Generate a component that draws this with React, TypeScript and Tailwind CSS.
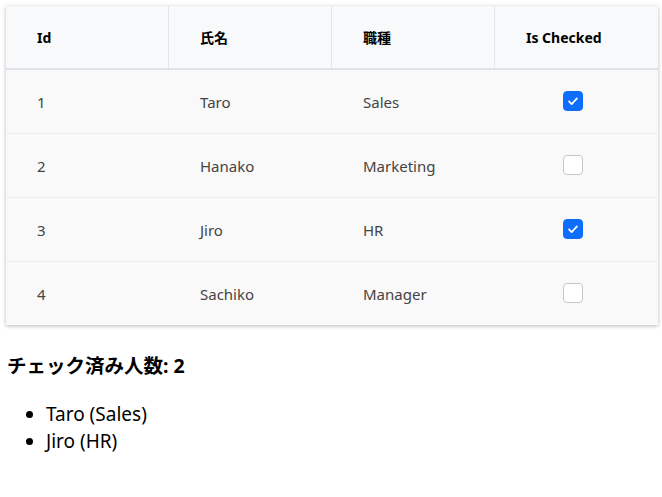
import { useState } from "react";

type Person = { id: number; name: string; job: string; checked: boolean };

const initial: Person[] = [
  { id: 1, name: "Taro", job: "Sales", checked: true },
  { id: 2, name: "Hanako", job: "Marketing", checked: false },
  { id: 3, name: "Jiro", job: "HR", checked: true },
  { id: 4, name: "Sachiko", job: "Manager", checked: false },
];

function Check({ on, onClick }: { on: boolean; onClick: () => void }) {
  return (
    <button
      onClick={onClick}
      className={`w-5 h-5 mb-[4px] rounded-[4px] flex items-center justify-center ${
        on ? "bg-[#0d6efd] border border-[#0d6efd]" : "bg-white border border-[#c4c8cc]"
      }`}
    >
      {on && (
        <svg viewBox="0 0 16 16" className="w-3.5 h-3.5" fill="none" stroke="white" strokeWidth={2} strokeLinecap="round" strokeLinejoin="round">
          <path d="M3.5 8.5l3 3 6-6.5" />
        </svg>
      )}
    </button>
  );
}

export default function App() {
  const [people, setPeople] = useState(initial);
  const checked = people.filter((p) => p.checked);

  const toggle = (id: number) =>
    setPeople((ps) => ps.map((p) => (p.id === id ? { ...p, checked: !p.checked } : p)));

  return (
    <div className="font-['Noto_Sans','Noto_Sans_CJK_JP',sans-serif] text-black px-2 pt-[6px]">
      <div className="-mx-[2px] w-[652px] bg-[#f9f9f9] shadow-[0_1px_4px_rgba(0,0,0,0.28)]">
        <div className="grid grid-cols-4 h-[64px] bg-[#f8f9fa] border-b-2 border-[#dee2e6] text-[14px] font-bold">
          <div className="flex items-center pl-[31px] border-r border-[#e3e6e9]">Id</div>
          <div className="flex items-center pl-[31px] border-r border-[#e3e6e9]">氏名</div>
          <div className="flex items-center pl-[31px] border-r border-[#e3e6e9]">職種</div>
          <div className="flex items-center pl-[31px]">Is Checked</div>
        </div>
        {people.map((p, i) => (
          <div
            key={p.id}
            className={`grid grid-cols-4 text-[15px] text-[#444] pt-[2px] ${
              i < people.length - 1 ? "h-[64px] border-b border-[#ececec]" : "h-[63px]"
            }`}
          >
            <div className="flex items-center pl-[31px]">{p.id}</div>
            <div className="flex items-center pl-[31px]">{p.name}</div>
            <div className="flex items-center pl-[31px]">{p.job}</div>
            <div className="flex items-center justify-center pr-[8px]">
              <Check on={p.checked} onClick={() => toggle(p.id)} />
            </div>
          </div>
        ))}
      </div>

      <h3 className="mt-[27px] -ml-[1px] text-[19.5px] font-bold leading-[27px]">チェック済み人数: {checked.length}</h3>
      <ul className="mt-[22px] list-disc pl-[38px] text-[19px] leading-[27px]">
        {checked.map((p) => (
          <li key={p.id}>
            {p.name} ({p.job})
          </li>
        ))}
      </ul>
    </div>
  );
}
